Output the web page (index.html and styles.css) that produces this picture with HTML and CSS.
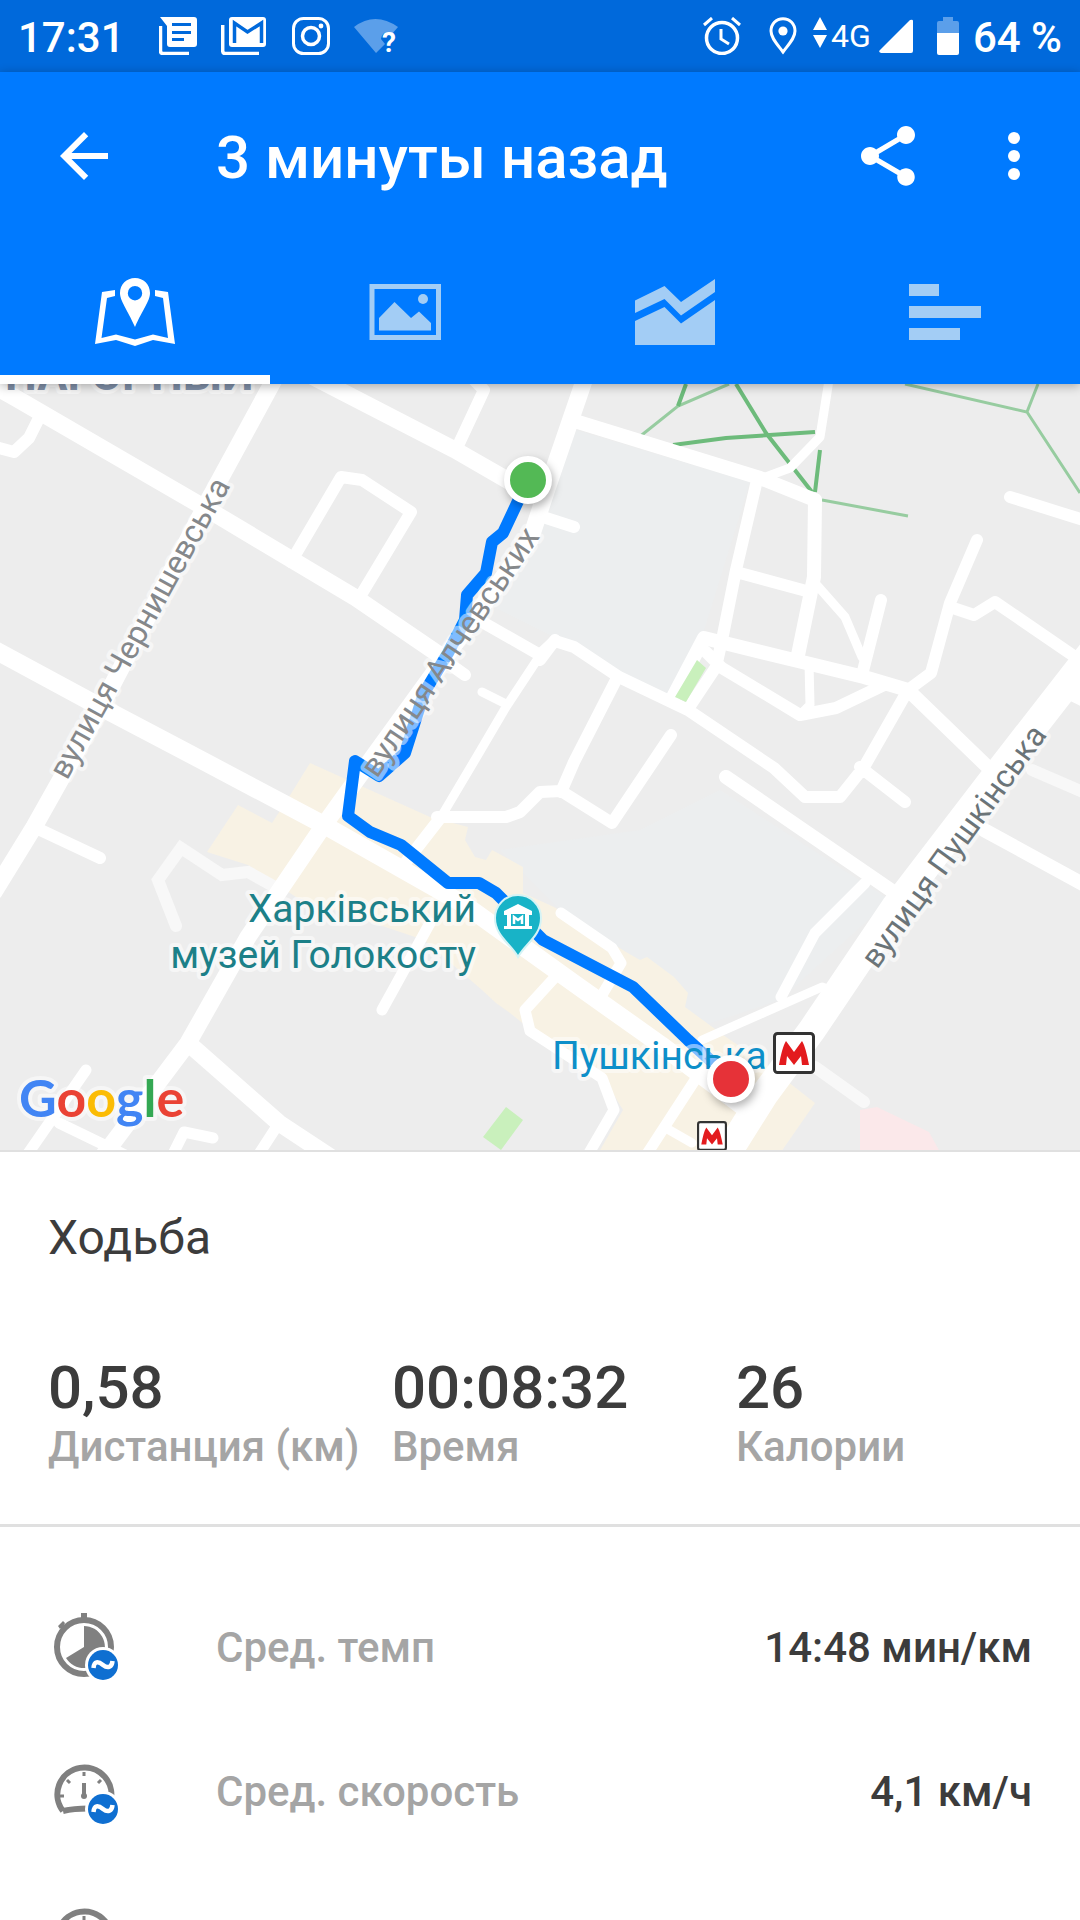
FILE: index.html
```
<!DOCTYPE html>
<html lang="ru">
<head>
    <meta charset="UTF-8">
    <meta name="viewport" content="width=device-width">
    <title>3 минуты назад</title>
    <link rel="stylesheet" href="styles.css">
</head>
<body>
<!-- shared shapes -->
<svg class="defs" width="0" height="0" aria-hidden="true">
    <symbol id="avg" viewBox="0 0 36 36">
        <circle cx="18" cy="18" r="18" fill="#fff"/>
        <circle cx="18" cy="18" r="15" fill="#0f6fd1"/>
        <path d="M8.500 21C9 14 13 14 18 18S27 20 27.500 14" fill="none" stroke="#fff" stroke-width="4.500"/>
    </symbol>
    <symbol id="gauge" viewBox="0 0 72 72">
        <path d="M15 56A27 27 0 1 1 62 48M15 56Q26 53.500 40 53.500" fill="none" stroke="#808080" stroke-width="6"/>
        <path d="M12 41h4M36 17v4M19 25l3 3M53 25l-3 3M60 41h-4" fill="none" stroke="#808080" stroke-width="3"/>
        <path d="M36 28v12" stroke="#808080" stroke-width="4"/>
        <circle cx="36" cy="41" r="3" fill="#808080"/>
    </symbol>
    <symbol id="metro" viewBox="0 0 42 42">
        <rect x="1.500" y="1.500" width="39" height="39" rx="3" fill="#fff" stroke="#333" stroke-width="3"/>
        <path d="M6 33C8 22 10 14 13 9L21 20L29 9C32 14 34 22 36 33H29L28 24L21 33L14 24L13 33Z" fill="#e31b1e"/>
    </symbol>
</svg>

<div class="status">
    <div class="group">
        <span class="time">17:31</span>
        <svg class="s-msg" width="38" height="38" viewBox="0 0 38 38">
            <path d="M1.500 9v25q0 2.500 2.500 2.500h26" fill="none" stroke="#fff" stroke-width="3.500"/>
            <path fill="#fff" fill-rule="evenodd" d="M1 0h34q3 0 3 3v24q0 3-3 3H11q-3 0-3-3V9zM13 6v3h19V6zM13 14v3h19v-3zM13 21v3h12v-3z"/>
        </svg>
        <svg class="s-mail" width="45" height="38" viewBox="0 0 45 38">
            <path d="M1.700 8v26q0 2.500 2.500 2.500H38" fill="none" stroke="#fff" stroke-width="3.500"/>
            <rect x="8" width="37" height="30" rx="3" fill="#fff"/>
            <path d="M13.500 26V6L26.500 15L40.500 6V26" fill="none" stroke="#0069db" stroke-width="3.500"/>
        </svg>
        <svg class="s-insta" width="38" height="38" viewBox="0 0 38 38" fill="none" stroke="#fff">
            <rect x="1.500" y="1.500" width="35" height="35" rx="10" stroke-width="3"/>
            <circle cx="19" cy="19" r="8.500" stroke-width="3.500"/>
            <circle cx="29" cy="9" r="2.400" fill="#fff" stroke="none"/>
        </svg>
        <svg class="s-wifi" width="46" height="46" viewBox="0 -4 46 46">
            <path d="M0 10Q21-6 44 10L38 17Q29 12 27 22L31 27L22 36Z" fill="#5b9fea"/>
            <text x="28" y="35" font-size="28" font-weight="700" fill="#fff">?</text>
        </svg>
    </div>
    <div class="group">
        <svg class="s-alarm" width="38" height="38" viewBox="0 0 38 38" fill="none" stroke="#fff">
            <circle cx="19" cy="21" r="15.500" stroke-width="3.500"/>
            <path d="M18 12v10l8 5M1 8l8-7M37 8l-8-7" stroke-width="3"/>
        </svg>
        <svg class="s-pin" width="28" height="38" viewBox="0 0 28 38">
            <path d="M14 1.700C7 1.700 2 7 2 14c0 7 6 13 12 21c6-8 12-14 12-21c0-7-5-12.300-12-12.300z" fill="none" stroke="#fff" stroke-width="3"/>
            <circle cx="14" cy="14" r="4.600" fill="#fff"/>
        </svg>
        <svg class="s-data" width="14" height="38" viewBox="0 0 14 38">
            <path d="M0 13L7 0l7 13zM0 18h14L7 31z" fill="#fff"/>
        </svg>
        <span class="net">4G</span>
        <svg class="s-signal" width="34" height="38" viewBox="0 0 34 38">
            <path d="M34 4v30q0 2-2 2H2q-3-1-1-3L31 3q3-1 3 1z" fill="#fff"/>
        </svg>
        <svg class="s-bat" width="22" height="38" viewBox="0 0 22 38">
            <path d="M0 17V6q0-2 2-2h4V0h10v4h4q2 0 2 2v11z" fill="#5b9fea"/>
            <path d="M0 16h22v20q0 2-2 2H2q-2 0-2-2z" fill="#fff"/>
        </svg>
        <span class="percent">64 %</span>
    </div>
</div>

<header class="header">
    <div class="bar">
        <button class="icon-btn" aria-label="Назад">
            <svg viewBox="0 0 24 24" fill="#fff"><path d="M20 11H7.830l5.590-5.590L12 4l-8 8 8 8 1.410-1.410L7.830 13H20v-2z"/></svg>
        </button>
        <h1>3 минуты назад</h1>
        <button class="icon-btn" aria-label="Поделиться">
            <svg viewBox="0 0 24 24" fill="#fff"><path d="M18 16.080c-.76 0-1.440.3-1.960.77L8.910 12.700c.05-.23.090-.46.090-.7s-.040-.47-.090-.7l7.050-4.110c.54.5 1.250.81 2.040.81 1.660 0 3-1.340 3-3s-1.340-3-3-3-3 1.340-3 3c0 .24.040.47.090.7L8.040 9.810C7.500 9.310 6.790 9 6 9c-1.660 0-3 1.340-3 3s1.340 3 3 3c.79 0 1.500-.31 2.040-.81l7.120 4.160c-.05.21-.08.43-.08.65 0 1.610 1.310 2.920 2.920 2.920s2.920-1.310 2.920-2.920-1.310-2.920-2.920-2.920z"/></svg>
        </button>
        <button class="icon-btn" aria-label="Меню">
            <svg viewBox="0 0 24 24" fill="#fff"><circle cx="12" cy="6" r="2"/><circle cx="12" cy="12" r="2"/><circle cx="12" cy="18" r="2"/></svg>
        </button>
    </div>
    <nav class="tabs">
        <button class="active" aria-label="Карта">
            <svg viewBox="0 0 84 72" fill="currentColor">
                <path d="M22 14L9 16L2 68L23 64L42 70L60 64L82 68L75 16L62 14V20L70 22L75 62L60 58.500L42 63.500L23 58.500L8.500 62L14 22L22 20Z"/>
                <path fill-rule="evenodd" d="M42 2C33.500 2 27 8.500 27 17C27 25 34 33 42 51C50 33 57 25 57 17C57 8.500 50.500 2 42 2ZM42 10A7.200 7.200 0 1 1 42 24.400A7.200 7.200 0 1 1 42 10Z"/>
            </svg>
        </button>
        <button aria-label="Фото">
            <svg viewBox="0 0 84 72" fill="currentColor">
                <path fill-rule="evenodd" d="M6.500 8H78V64H6.500ZM11.500 13V59H73V13Z"/>
                <path d="M16 42L31.500 26L48 42L56 35.500L68 47V54.500H16Z"/>
                <circle cx="60" cy="23" r="5"/>
            </svg>
        </button>
        <button aria-label="Графики">
            <svg viewBox="0 0 84 72" fill="currentColor">
                <path d="M2 24.500L31.500 10L48 26L82 3V16L48 39.500L31.500 23L2 37Z"/>
                <path d="M2 45L31.500 31L48 47.500L82 24V69H2Z"/>
            </svg>
        </button>
        <button aria-label="Отрезки">
            <svg viewBox="0 0 84 72" fill="currentColor">
                <path d="M6 8h30v12H6zM6 30h72v12H6zM6 52h51v12H6z"/>
            </svg>
        </button>
    </nav>
</header>

<main class="content">
    <svg class="map" viewBox="0 384 1080 768">
        <rect y="384" width="1080" height="768" fill="#ededed"/>

        <!-- areas -->
        <path fill="#eceeef" d="M576 430L750 482L702 637L667 697L560 640L480 600L545 510ZM640 830L720 790L890 900L780 1000L690 1030L560 910L500 850Z"/>
        <path fill="#f8f2e4" d="M310 763L430 817L468 827L465 840L475 857L486 860L492 850L523 867V893L554 907L626 952L640 960L647 957L674 977L688 993L685 1007L726 1037L760 1060L815 1103L781 1152H599L623 1110L609 1087L540 1037L510 1013L496 1003L482 990L424 940L296 897L275 883L248 865L207 852L238 805L272 823L289 797Z"/>
        <path fill="#fbe8ea" d="M860 1110L877 1107L929 1132L940 1152H860Z"/>

        <!-- park paths -->
        <g fill="none" stroke="#97cca0" stroke-width="3">
            <path d="M729 384L678 406L638 438M822 500L908 516M905 384L1027 412L1080 493M1038 384L1027 412"/>
            <path stroke="#6dbb7b" stroke-width="4" d="M686 384L678 406M736 384L766 433L812 492M673 445L726 438L815 432M820 450L815 492"/>
        </g>

        <!-- streets -->
        <g fill="none" stroke="#f8f8f8" stroke-width="12" stroke-linecap="round">
            <path d="M176 926L158 880L181 848L222 875L248 872L275 887M1032 770L1090 795M815 1067L864 1102"/>
        </g>
        <g class="streets">
            <path stroke-width="9" d="M829 380L820 437L790 468L760 479M815 583L845 617L862 657M809 663L810 705L800 715M537 660L506 707L479 753L441 817M482 692L506 704M702 1040L822 987L836 992M664 1127L692 1143"/>
            <path stroke-width="12" d="M-5 447L14 452L29 438L42 412M469 375L484 390L456 450M291 562L341 477L362 480L411 512L358 600M34 827L100 858M543 517L574 527M441 817L406 862M437 817H506L520 812L540 792L561 791L612 823L671 735M561 792L574 762L617 678M555 640L540 660M444 660L465 675"/>
            <path stroke-width="12" d="M470 615L540 655L555 641L574 647L619 677L688 710L774 768L805 797H840L864 767L908 690M757 480L736 570L722 640L716 667L688 709M705 651L722 668L800 715L836 708L884 685M736 572L810 592M881 600L862 675M977 540L950 603L931 673L908 690M950 607L974 615L995 602L1090 667M1010 497L1090 522M860 767L905 802"/>
            <path stroke-width="14" d="M673 697L704 638L798 661L864 677L908 690L998 777M578 422L760 478L815 500L814 577L797 660M726 777L895 893M984 830L1090 888M1070 693L1090 703"/>
            <path stroke-width="11" d="M865 883L815 933L781 997M561 913L612 948L621 963L599 1000M430 923L382 1010M557 975L525 1010L530 1031L602 1078L614 1110L585 1160M695 1080L643 1160M279 1123L255 1160M170 1160L184 1132L213 1138M86 1070L27 1155M59 1123L125 1155"/>
            <path stroke-width="17" d="M-20 378L14 397L207 509L356 598L444 658M275 378L207 503L93 722L34 827L-6 892M300 370L455 450L528 492M586 375L550 480L530 540L344 797L324 825L248 937L188 1043L100 1160M188 1043L279 1123L335 1160"/>
            <path stroke-width="18" d="M-5 650L93 703L207 763L324 825L465 905L575 984L661 1045L745 1108"/>
            <path stroke-width="28" d="M1095 648L1000 770L895 907L812 1030L764 1095L720 1165"/>
        </g>
        <path fill="#c9f0bc" d="M697 660L706 668L686 702L675 697ZM506 1107L523 1120L501 1150L483 1137Z"/>

        <!-- track -->
        <path class="track" d="M528 480L503 533L492 542L486 573L467 595L465 620L448 653L424 693L405 753L379 776L355 761L348 816L370 832L401 845L448 883H479L496 893L543 940L633 987L688 1040L731 1079"/>

        <!-- labels -->
        <text class="district" x="5" y="390">НАГОРНЫЙ</text>
        <text class="street" transform="translate(67 781) rotate(-61)">вулиця Чернишевська</text>
        <text class="street" transform="translate(377 779) rotate(-56)">вулиця Алчевських</text>
        <text class="street dark" transform="translate(877 970) rotate(-54)">вулиця Пушкінська</text>
        <text class="place" x="476" y="922">Харківський</text>
        <text class="place" x="476" y="968">музей Голокосту</text>
        <text class="station" x="552" y="1069">Пушкінська</text>
        <text class="google" x="19" y="1117"><tspan fill="#4285f4">G</tspan><tspan fill="#ea4335">o</tspan><tspan fill="#fbbc05">o</tspan><tspan fill="#4285f4">g</tspan><tspan fill="#34a853">l</tspan><tspan fill="#ea4335">e</tspan></text>

        <!-- museum pin -->
        <path d="M518 957C511 944 495 936 495 918A23 23 0 0 1 541 918C541 936 525 944 518 957Z" fill="#18b3c7" stroke="#d5f3f5" stroke-width="2"/>
        <path fill="#fff" fill-rule="evenodd" d="M504 915V911L518 904L532 911V915H529V926H532V929H504V926H507V915ZM511 914V926H525V914Z"/>
        <path d="M514 924V917L518 920L522 917V924" fill="none" stroke="#fff" stroke-width="2.500"/>

        <use href="#metro" x="773" y="1032" width="42" height="42"/>
        <use href="#metro" x="697" y="1121" width="30" height="30"/>

        <!-- start and finish -->
        <g class="points">
            <circle cx="528" cy="480" r="21" fill="#53b955"/>
            <circle cx="731" cy="1079" r="21" fill="#e63238"/>
        </g>
        <rect y="1150" width="1080" height="2" fill="#e0e0e0"/>
    </svg>

    <section class="summary">
        <h2>Ходьба</h2>
        <div class="stats">
            <div><strong>0,58</strong><span>Дистанция (км)</span></div>
            <div><strong>00:08:32</strong><span>Время</span></div>
            <div><strong>26</strong><span>Калории</span></div>
        </div>
    </section>

    <ul class="details">
        <li>
            <svg viewBox="0 0 72 72">
                <circle cx="36" cy="36" r="27" fill="none" stroke="#808080" stroke-width="6"/>
                <path d="M33 2h6v8h-6zM10 15l5-5 2 2-1 2 2 2-3 3-2-2-1 1z" fill="#808080"/>
                <path d="M36 36V15A21 21 0 1 1 18 47Z" fill="#808080"/>
                <use href="#avg" x="37" y="36" width="36" height="36"/>
            </svg>
            <span class="name">Сред. темп</span>
            <span class="value">14:48 мин/км</span>
        </li>
        <li>
            <svg viewBox="0 0 72 72">
                <use href="#gauge" width="72" height="72"/>
                <use href="#avg" x="37" y="36" width="36" height="36"/>
            </svg>
            <span class="name">Сред. скорость</span>
            <span class="value">4,1 км/ч</span>
        </li>
        <li>
            <svg viewBox="0 0 72 72"><use href="#gauge" width="72" height="72"/></svg>
        </li>
    </ul>
</main>
</body>
</html>
```
FILE: styles.css
```
*{ box-sizing:border-box;}
html,body{ height:100%;}
body,h1,h2,ul{ margin:0; padding:0;}
body{
    display:flex;
    flex-direction:column;
    overflow:hidden;
    background:#fff;
    color:#3c3c3c;
    font-family:Roboto, "Noto Sans", sans-serif;
}
button{ border:0; padding:0; background:none; cursor:pointer;}
svg{ display:block; flex:none;}
.defs{ position:absolute;}

/* status bar */
.status{
    flex:none;
    display:flex;
    justify-content:space-between;
    height:72px;
    padding:0 18px;
    background:#0069db;
    color:#fff;
    font-size:42px;
    font-weight:500;
    line-height:48px;
}
.group{ display:flex; align-items:center;}
.time,.percent{ padding-top:4px;}
.s-msg{ margin-left:34px;}
.s-mail{ margin-left:24px;}
.s-insta{ margin-left:26px;}
.s-wifi{ margin-left:24px;}
.s-pin{ margin-left:28px;}
.s-data{ margin-left:16px;}
.net{ margin-left:4px; font-size:32px; font-weight:400;}
.s-signal{ margin-left:8px;}
.s-bat{ margin-left:24px;}
.percent{ margin-left:14px;}

/* header */
.header{
    flex:none;
    position:relative;
    z-index:1;
    background:#007aff;
    color:#fff;
    box-shadow:0 2px 10px rgba(0,0,0,.3);
}
.bar{
    display:flex;
    align-items:center;
    height:168px;
    padding:0 30px 0 48px;
}
.bar h1{
    flex:1;
    padding:4px 0 0 96px;
    font-size:60px;
    font-weight:500;
    line-height:72px;
}
.icon-btn svg{ width:72px; height:72px;}
.icon-btn + .icon-btn{ margin-left:54px;}
.tabs{ display:flex; height:144px;}
.tabs button{
    flex:1;
    display:flex;
    align-items:center;
    justify-content:center;
    color:#a3cdf5;
}
.tabs button.active{
    color:#fff;
    box-shadow:inset 0 -9px #fff;
}
.tabs svg{ width:84px; height:72px;}

.content{ flex:1; min-height:0; overflow:hidden;}

/* map */
.map{ width:100%; height:auto;}
.map text{
    paint-order:stroke;
    stroke:rgba(255,255,255,.5);
    stroke-width:8px;
    stroke-linejoin:round;
}
.streets{
    fill:none;
    stroke:#fff;
    stroke-linecap:round;
    stroke-linejoin:round;
}
.track{
    fill:none;
    stroke:#007aff;
    stroke-width:12px;
    stroke-linejoin:round;
}
.district{ font-size:45px; font-weight:700; fill:#8090a8;}
.street{ font-size:32px; fill:#85888b;}
.street.dark{ fill:#6b7478;}
.place{ font-size:39px; fill:#1c8088; text-anchor:end;}
.station{ font-size:39px; fill:#0d8fc9;}
.map .google{ font-family:Lato, sans-serif; font-size:52px; font-weight:700;}
.points{
    stroke:#fff;
    stroke-width:6px;
    filter:drop-shadow(2px 4px 4px rgba(0,0,0,.3));
}

/* workout summary */
.summary{
    padding:58px 0 54px 48px;
    border-bottom:3px solid #e0e0e0;
}
.summary h2{ font-size:48px; font-weight:400; line-height:56px;}
.stats{
    display:grid;
    grid-template-columns:repeat(3,1fr);
    margin-top:86px;
}
.stats strong{ display:block; font-size:60px; font-weight:500; line-height:72px;}
.stats span{
    display:block;
    color:#a5a5a5;
    font-size:42px;
    font-weight:500;
    line-height:46px;
    white-space:nowrap;
}

/* details */
.details{ list-style:none; padding:48px 48px 0; font-size:42px; font-weight:500;}
.details li{ display:flex; align-items:center; height:144px;}
.details svg{ width:72px; height:72px; overflow:visible;}
.details .name{ flex:1; padding-left:96px; color:#a5a5a5;}
```
